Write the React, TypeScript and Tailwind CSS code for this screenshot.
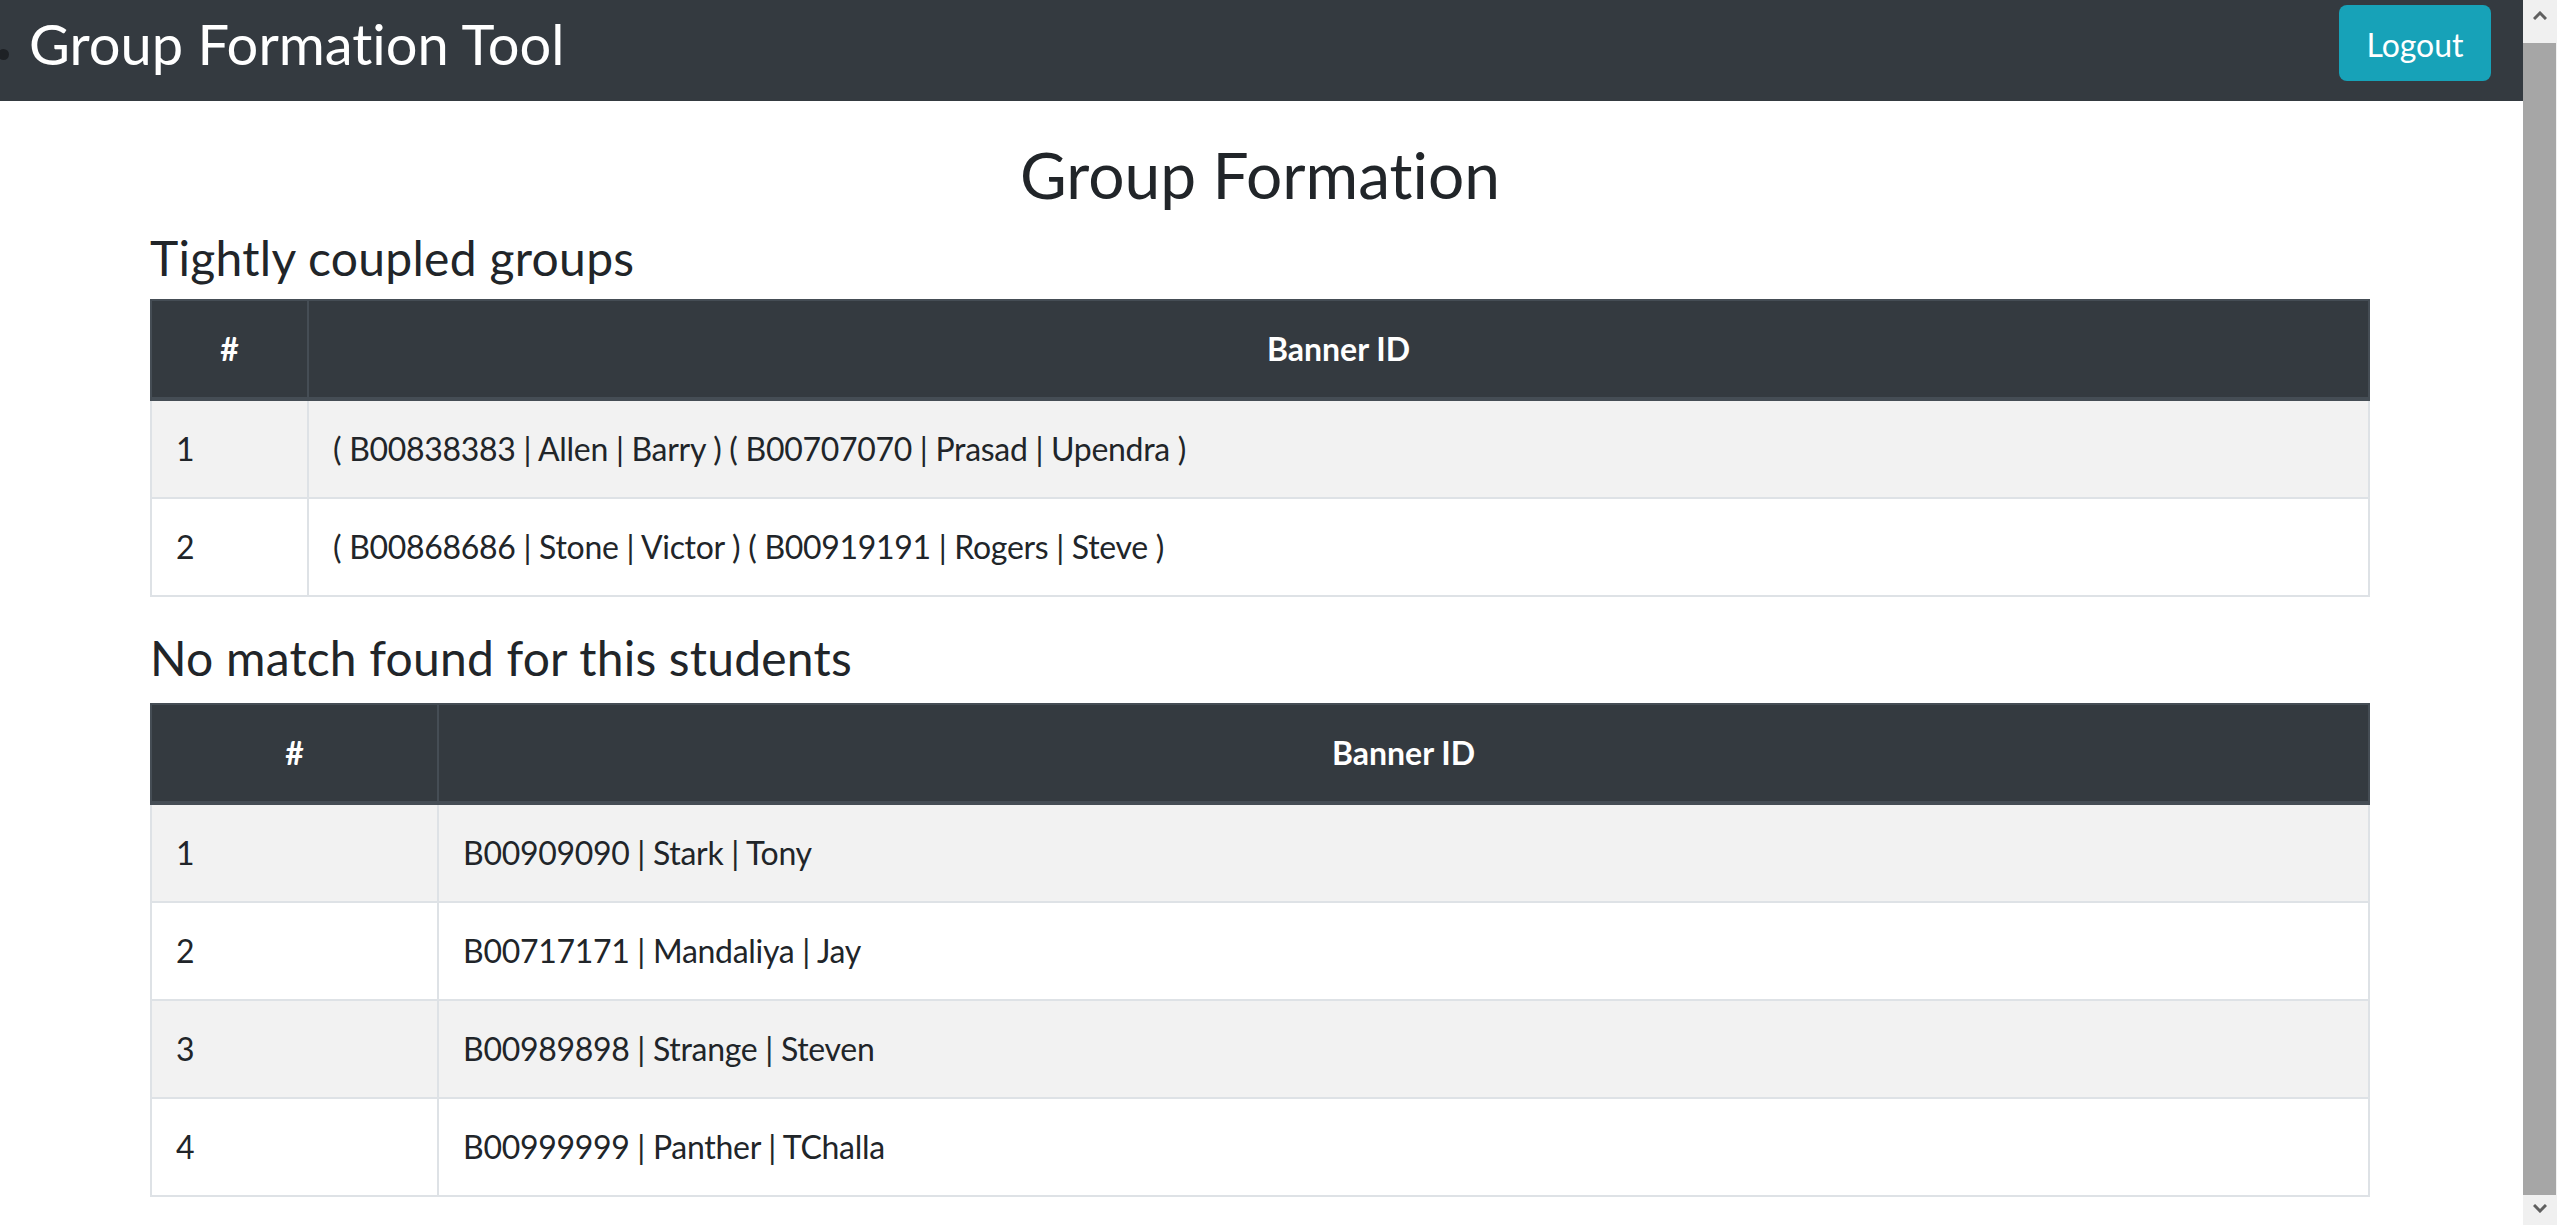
import React from "react";

const font = { fontFamily: 'Lato, "Open Sans", sans-serif' };

function DataTable({
  firstCol,
  rows,
}: {
  firstCol: string;
  rows: string[];
}) {
  return (
    <table className="w-full border-collapse text-[32px] leading-[48px] text-[#212529]">
      <thead>
        <tr>
          <th
            className={`${firstCol} border-2 border-b-4 border-[#454d55] bg-[#343a40] px-[24px] py-[24px] text-center font-bold text-white`}
          >
            #
          </th>
          <th className="border-2 border-b-4 border-[#454d55] bg-[#343a40] px-[24px] py-[24px] text-center font-bold text-white">
            Banner ID
          </th>
        </tr>
      </thead>
      <tbody>
        {rows.map((r, i) => (
          <tr key={i} className={i % 2 === 0 ? "bg-[#f2f2f2]" : "bg-white"}>
            <td className="border-2 border-[#dee2e6] px-[24px] py-[24px] text-left">
              {i + 1}
            </td>
            <td className="border-2 border-[#dee2e6] px-[24px] py-[24px] text-left tracking-[-0.3px]">
              {r}
            </td>
          </tr>
        ))}
      </tbody>
    </table>
  );
}

export default function App() {
  return (
    <div
      className="flex h-[1225px] w-full overflow-hidden bg-white [font-variant-ligatures:none]"
      style={font}
    >
      <div className="min-w-0 flex-1">
        <nav className="relative flex h-[101px] items-start justify-between bg-[#343a40] pr-[32px]">
          <span className="absolute left-[-2px] top-[49px] h-[11px] w-[11px] rounded-full bg-[#1e2125]" />
          <span className="mt-[10px] pl-[29px] text-[56px] leading-[67px] text-white">
            Group Formation Tool
          </span>
          <button className="mt-[5px] h-[76px] w-[152px] rounded-[8px] bg-[#17a2b8] pt-[3px] text-[32px] leading-[48px] text-white">
            Logout
          </button>
        </nav>
        <main className="pl-[150px] pr-[153px] text-[#212529]">
          <h2 className="mt-[35px] text-center text-[64px] leading-[77px]">
            Group Formation
          </h2>
          <h4 className="mt-[16px] mb-[12px] text-[48px] leading-[58px] tracking-[0.3px]">
            Tightly coupled groups
          </h4>
          <DataTable
            firstCol="w-[157px]"
            rows={[
              "( B00838383 | Allen | Barry ) ( B00707070 | Prasad | Upendra )",
              "( B00868686 | Stone | Victor ) ( B00919191 | Rogers | Steve )",
            ]}
          />
          <h4 className="mt-[32px] mb-[16px] text-[48px] leading-[58px] tracking-[0.2px]">
            No match found for this students
          </h4>
          <DataTable
            firstCol="w-[287px]"
            rows={[
              "B00909090 | Stark | Tony",
              "B00717171 | Mandaliya | Jay",
              "B00989898 | Strange | Steven",
              "B00999999 | Panther | TChalla",
            ]}
          />
        </main>
      </div>
      <div className="flex h-full w-[34px] flex-col bg-[#f0f0f0]">
        <div className="flex h-[43px] items-start justify-center pt-[11px]">
          <svg width="14" height="9" viewBox="0 0 14 9">
            <path d="M1 8 L7 2 L13 8" stroke="#606060" strokeWidth="3" fill="none" />
          </svg>
        </div>
        <div className="mr-[1px] flex-1 bg-[#a6a6a6]" />
        <div className="flex h-[30px] items-start justify-center pt-[9px]">
          <svg width="14" height="9" viewBox="0 0 14 9">
            <path d="M1 1 L7 7 L13 1" stroke="#606060" strokeWidth="3" fill="none" />
          </svg>
        </div>
      </div>
    </div>
  );
}
